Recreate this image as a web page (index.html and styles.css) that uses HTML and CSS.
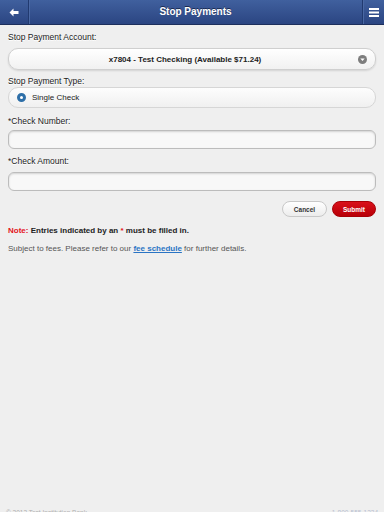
FILE: index.html
```html
<!DOCTYPE html>
<html lang="en">
<head>
    <meta charset="UTF-8">
    <meta name="viewport" content="width=device-width, initial-scale=1.0">
    <title>Stop Payments</title>
    <link rel="stylesheet" href="styles.css">
</head>
<body>
    <div class="header">
        <a class="header-btn back-btn" href="#">
            <svg width="10" height="9" viewBox="0 0 10 9">
                <path d="M4.5 0.5 L0.5 4.5 L4.5 8.5 L4.5 6 L9.5 6 L9.5 3 L4.5 3 Z" fill="#fff"/>
            </svg>
        </a>
        <h1>Stop Payments</h1>
        <a class="header-btn menu-btn" href="#">
            <svg width="10" height="9" viewBox="0 0 10 9">
                <rect x="0" y="0" width="10" height="2" fill="#fff"/>
                <rect x="0" y="3.5" width="10" height="2" fill="#fff"/>
                <rect x="0" y="7" width="10" height="2" fill="#fff"/>
            </svg>
        </a>
    </div>

    <div class="content">
        <div class="field field-account">
            <label>Stop Payment Account:</label>
            <div class="select-box">
                <span>x7804 - Test Checking (Available $71.24)</span>
                <span class="select-arrow">
                    <svg width="9" height="9" viewBox="0 0 9 9">
                        <circle cx="4.5" cy="4.5" r="4.5" fill="#7d7d7d"/>
                        <path d="M2.3 3.4 L6.7 3.4 L4.5 6 Z" fill="#fff"/>
                    </svg>
                </span>
            </div>
        </div>

        <div class="field field-type">
            <label>Stop Payment Type:</label>
            <div class="radio-box">
                <span class="radio"></span>
                <span>Single Check</span>
            </div>
        </div>

        <div class="field field-number">
            <label>*Check Number:</label>
            <input type="text" class="text-input">
        </div>

        <div class="field field-amount">
            <label>*Check Amount:</label>
            <input type="text" class="text-input">
        </div>

        <div class="actions">
            <button class="btn btn-cancel">Cancel</button>
            <button class="btn btn-submit">Submit</button>
        </div>

        <p class="note"><span class="note-label">Note:</span> Entries indicated by an <span class="note-label">*</span> must be filled in.</p>
        <p class="fees">Subject to fees. Please refer to our <a href="#">fee schedule</a> for further details.</p>
    </div>

    <div class="footer">
        <span>&copy; 2013 Test Institution Bank</span>
        <a href="#">1-800-555-1234</a>
    </div>
</body>
</html>
```

FILE: styles.css
```css
* {
    margin: 0;
    padding: 0;
    box-sizing: border-box;
}
html, body {
    height: 100%;
}
body {
    font-family: 'Liberation Sans', Arial, Helvetica, sans-serif;
    background-color: #efefef;
    color: #222;
    display: flex;
    flex-direction: column;
    overflow: hidden;
}
.header {
    height: 25px;
    display: flex;
    align-items: stretch;
    background: linear-gradient(#40609e, #2b4582);
    border-bottom: 1px solid #1d2f5c;
}
.header h1 {
    flex: 1;
    text-align: center;
    color: #fff;
    font-size: 10px;
    font-weight: bold;
    line-height: 24px;
    text-shadow: 0 -1px 0 #1a2a50;
}
.header-btn {
    width: 29px;
    display: flex;
    align-items: center;
    justify-content: center;
}
.back-btn {
    border-right: 1px solid #213a70;
    box-shadow: 1px 0 0 #4a68a4;
}
.menu-btn {
    width: 22px;
    border-left: 1px solid #213a70;
    box-shadow: inset 1px 0 0 #4a68a4;
}
.content {
    flex: 1;
    padding: 7px 8px 0;
}
.field label {
    display: block;
    font-size: 8.5px;
    line-height: 10px;
    color: #222;
    text-shadow: 0 1px 0 #fff;
}
.field-account {
    margin-bottom: 6px;
}
.field-account label {
    margin-bottom: 6px;
}
.field-type {
    margin-bottom: 8px;
}
.field-type label {
    margin-bottom: 1px;
}
.field-number {
    margin-bottom: 7px;
}
.field-number label {
    margin-bottom: 4px;
}
.field-amount label {
    margin-bottom: 6px;
}
.select-box {
    position: relative;
    height: 22px;
    display: flex;
    align-items: center;
    justify-content: center;
    padding-right: 14px;
    font-size: 8px;
    font-weight: bold;
    background: linear-gradient(#ffffff, #f1f1f1);
    border: 1px solid #cfcfcf;
    border-radius: 10px;
    box-shadow: 0 1px 2px rgba(0,0,0,0.12);
}
.select-arrow {
    position: absolute;
    right: 8px;
    top: 6px;
    line-height: 0;
}
.radio-box {
    height: 21px;
    display: flex;
    align-items: center;
    gap: 6px;
    padding-left: 8px;
    font-size: 8px;
    background: linear-gradient(#fdfdfd, #f0f0f0);
    border: 1px solid #d6d6d6;
    border-radius: 10px;
}
.radio {
    width: 9px;
    height: 9px;
    border-radius: 50%;
    border: 3px solid #2e6fa8;
    background-color: #fff;
}
.text-input {
    display: block;
    width: 100%;
    height: 19px;
    background-color: #f8f8f8;
    border: 1px solid #bcbcbc;
    border-radius: 6px;
    box-shadow: inset 0 1px 2px rgba(0,0,0,0.15);
}
.actions {
    display: flex;
    justify-content: flex-end;
    gap: 5px;
    margin-top: 10px;
}
.btn {
    font-family: inherit;
    font-size: 6.5px;
    font-weight: bold;
    height: 16px;
    padding: 0 8px;
    border-radius: 8px;
    cursor: pointer;
}
.btn-cancel {
    width: 45px;
    color: #333;
    background: linear-gradient(#ffffff, #ececec);
    border: 1px solid #c8c8c8;
}
.btn-submit {
    width: 44px;
    color: #fff;
    background: linear-gradient(#d9101a, #b80008);
    border: 1px solid #a80006;
}
.note {
    margin-top: 9px;
    font-size: 8px;
    line-height: 10px;
    font-weight: bold;
    color: #222;
}
.note-label {
    color: #e4141c;
}
.fees {
    margin-top: 8px;
    font-size: 8px;
    line-height: 10px;
    color: #555;
}
.fees a {
    color: #2a74c4;
    font-weight: bold;
    text-decoration: underline;
}
.footer {
    display: flex;
    justify-content: space-between;
    padding: 0 6px;
    height: 4px;
    font-size: 6.5px;
    color: #b0b0b0;
    line-height: 9px;
}
.footer a {
    color: #b8bfd0;
    text-decoration: none;
}
```
